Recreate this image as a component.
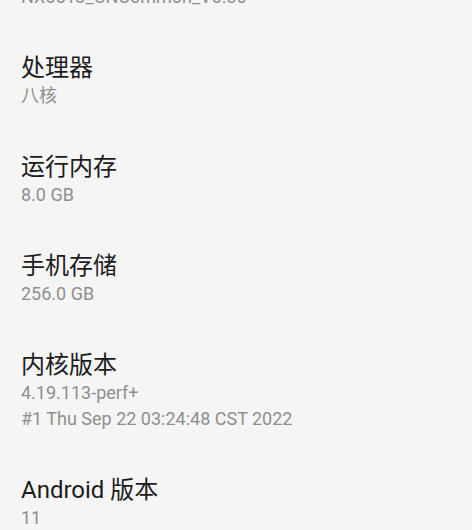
import React from "react";

const font = { fontFamily: '"Roboto", "Noto Sans CJK SC", sans-serif' };

function Item({ title, lines }) {
  return (
    <div className="pt-[43px]">
      <div className="h-[30px] leading-[30px] text-[24px] text-[#1c1c1c]">{title}</div>
      {lines.map((l, i) => (
        <div key={i} className="h-[26px] leading-[26px] text-[18px] text-[#8f8f8f]">
          {l}
        </div>
      ))}
    </div>
  );
}

export default function App() {
  return (
    <div
      className="w-[472px] h-[530px] overflow-hidden bg-[#f5f5f5] pl-[21px]"
      style={font}
    >
      <div className="-mt-[16px] h-[26px] leading-[26px] text-[18px] text-[#8f8f8f]">
        NX651J_CNCommon_V5.30
      </div>
      <Item title="处理器" lines={["八核"]} />
      <Item title="运行内存" lines={["8.0 GB"]} />
      <Item title="手机存储" lines={["256.0 GB"]} />
      <Item
        title="内核版本"
        lines={["4.19.113-perf+", "#1 Thu Sep 22 03:24:48 CST 2022"]}
      />
      <Item title="Android 版本" lines={["11"]} />
    </div>
  );
}
